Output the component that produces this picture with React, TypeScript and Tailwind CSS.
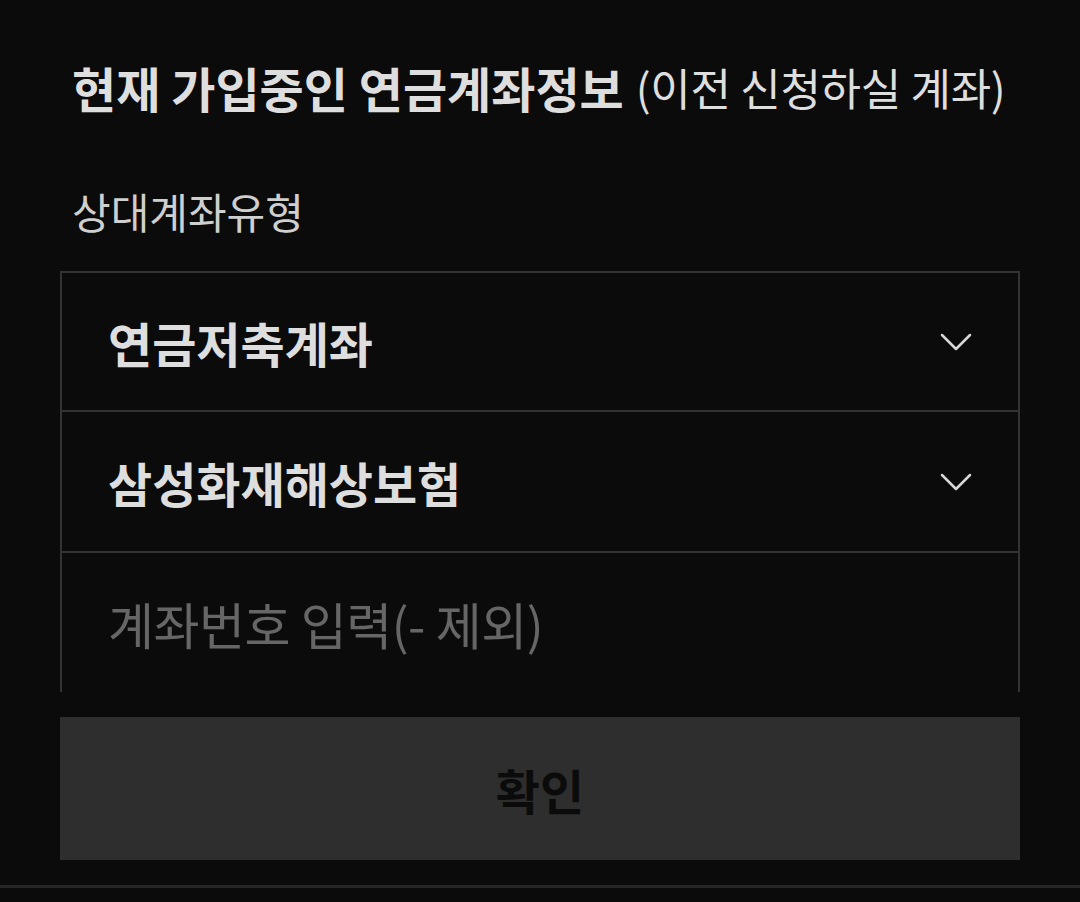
import React from "react";

function Chevron() {
  return (
    <svg width="32" height="20" viewBox="0 0 32 20" fill="none">
      <path d="M2 3 L16 17 L30 3" stroke="#d8d8d8" strokeWidth="2.5" strokeLinecap="round" strokeLinejoin="round" />
    </svg>
  );
}

export default function App() {
  return (
    <div
      className="w-[1080px] h-[902px] bg-[#0b0b0b] overflow-hidden flex flex-col"
      style={{ fontFamily: '"Noto Sans CJK KR", "Noto Sans", sans-serif' }}
    >
      <div className="h-[174px] pl-[72px] flex items-center leading-none">
        <span className="text-[48px] font-bold text-[#dedede] tracking-[0px]">현재 가입중인 연금계좌정보</span>
        <span className="text-[44px] text-[#dedede] ml-[12px] tracking-[-0.3px]">(이전 신청하실 계좌)</span>
      </div>
      <div className="h-[74px] pl-[72px] flex items-center text-[42px] leading-none text-[#cfcfcf]">상대계좌유형</div>
      <div className="mt-[23px] mx-[60px] flex flex-col">
        <div className="h-[141px] border-2 border-[#333333] flex items-center justify-between pl-[46px] pr-[46px]">
          <span className="text-[48px] font-bold text-[#dedede] leading-none">연금저축계좌</span>
          <Chevron />
        </div>
        <div className="h-[141px] border-2 border-t-0 border-[#333333] flex items-center justify-between pl-[46px] pr-[46px]">
          <span className="text-[48px] font-bold text-[#dedede] leading-none">삼성화재해상보험</span>
          <Chevron />
        </div>
        <div className="h-[139px] border-2 border-t-0 border-b-0 border-[#333333] flex items-center pl-[46px]">
          <span className="text-[50px] text-[#666666] leading-none tracking-[-0.5px]">계좌번호 입력(- 제외)</span>
        </div>
      </div>
      <div className="mt-[25px] mx-[60px] h-[143px] bg-[#2e2e2e] flex items-center justify-center">
        <span className="text-[48px] font-bold text-[#0b0b0b] leading-none">확인</span>
      </div>
      <div className="mt-[25px] h-[3px] bg-[#262626]" />
    </div>
  );
}
